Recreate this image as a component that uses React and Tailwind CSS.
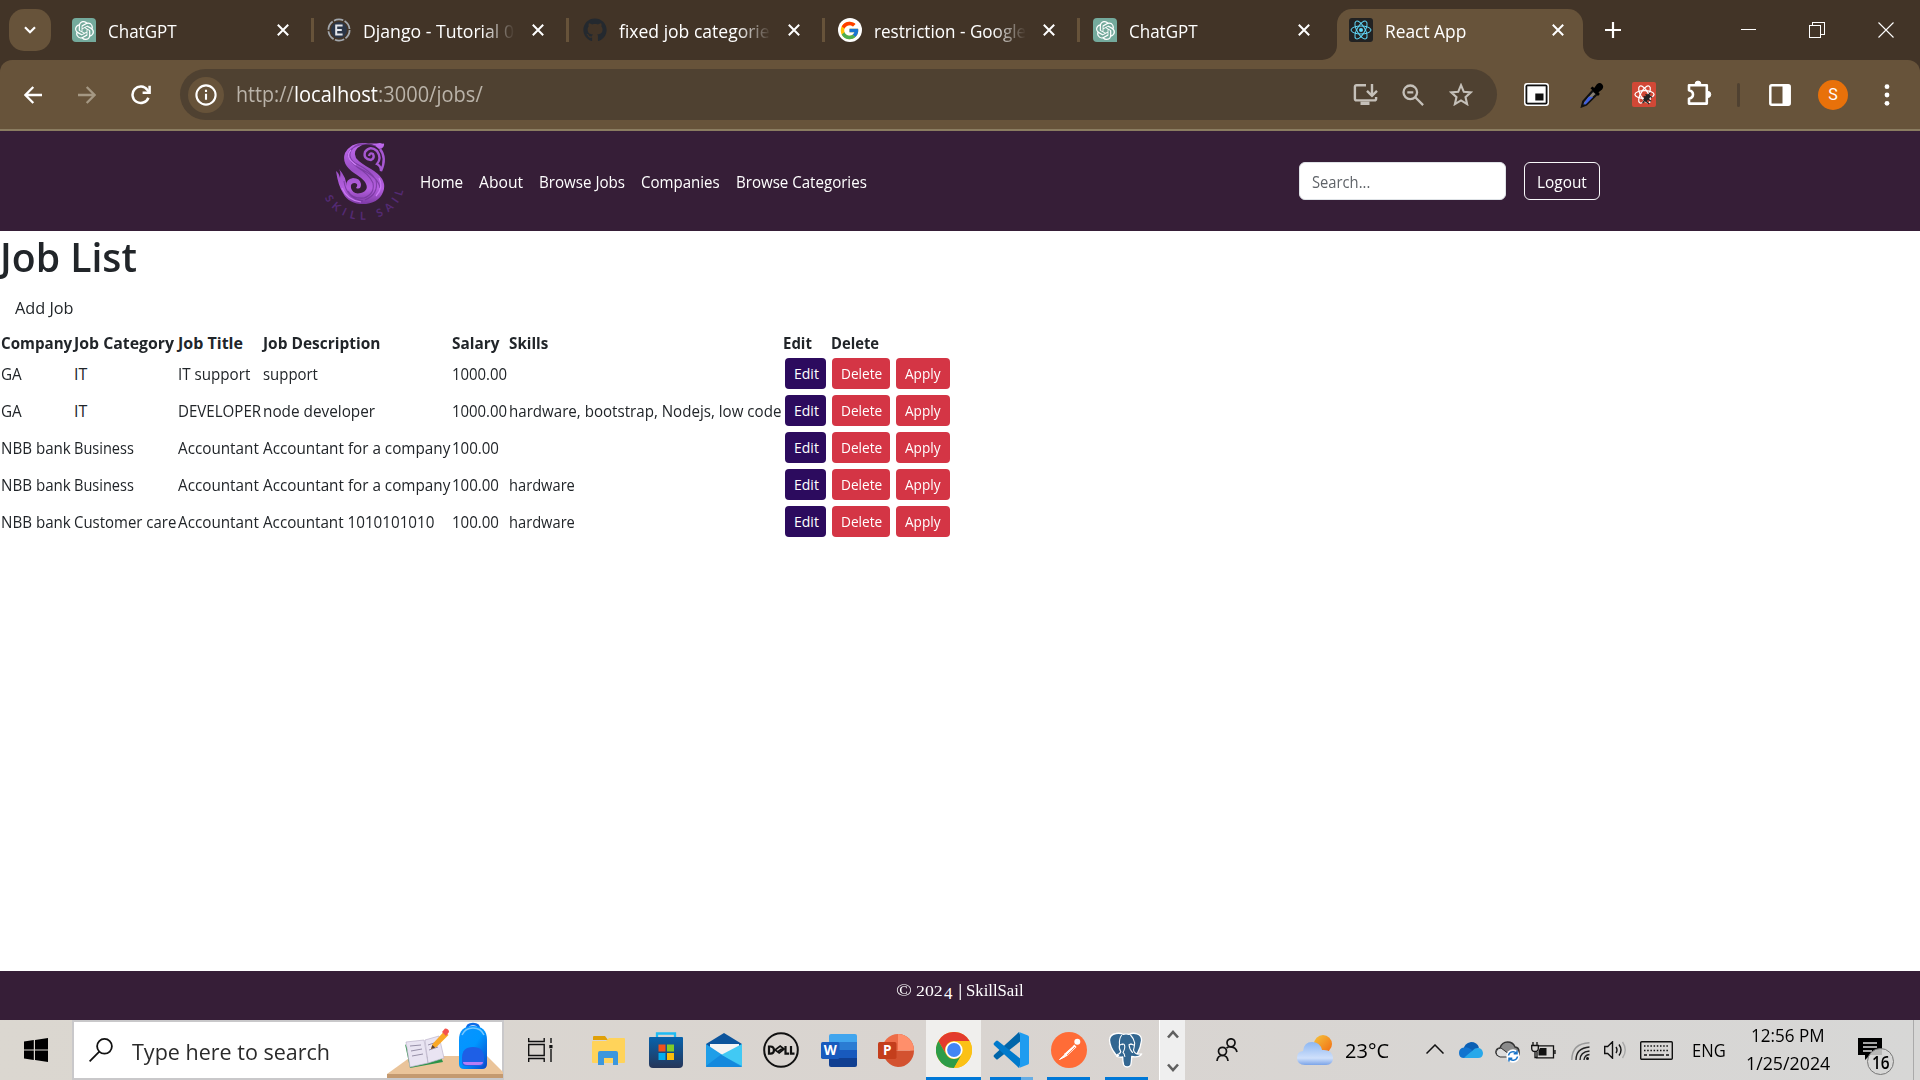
import React, { useLayoutEffect, useRef, useState } from "react";
import { SiOpenai } from "react-icons/si";
import { FaGithub } from "react-icons/fa";
import { FcGoogle } from "react-icons/fc";

/* Text run stretched to the width of its box. */
function Fit({ className = "", children }) {
  const box = useRef(null);
  const run = useRef(null);
  const [k, setK] = useState(1);
  useLayoutEffect(() => {
    setK(box.current.clientWidth / run.current.offsetWidth);
  }, []);
  return (
    <span ref={box} className={"block shrink-0 whitespace-nowrap " + className}>
      <span ref={run} className="inline-block origin-left" style={{ transform: `scaleX(${k})` }}>
        {children}
      </span>
    </span>
  );
}

const ReactAtom = ({ className, stroke, fill }) => (
  <svg viewBox="0 0 24 24" className={className} fill="none" stroke={stroke} strokeWidth="1">
    <ellipse cx="12" cy="12" rx="10" ry="4" />
    <ellipse cx="12" cy="12" rx="10" ry="4" transform="rotate(60 12 12)" />
    <ellipse cx="12" cy="12" rx="10" ry="4" transform="rotate(120 12 12)" />
    <circle cx="12" cy="12" r="2" fill={fill} stroke="none" />
  </svg>
);

const GptIcon = () => (
  <div className="flex size-6 shrink-0 items-center justify-center rounded-[4px] rounded-br-none bg-[#74aa9c]">
    <SiOpenai className="size-[19px] text-white" />
  </div>
);

const DjangoIcon = () => (
  <svg viewBox="0 0 24 24" className="size-6 shrink-0">
    <circle cx="12" cy="12" r="10.6" fill="none" stroke="#a3a8ae" strokeWidth="1.8" strokeDasharray="9.6 1.5" />
    <circle cx="12" cy="12" r="8" fill="#2b3648" />
    <path d="M15.6 7.4H9.2v9.2h6.4M9.2 12h5.6" fill="none" stroke="#e3e5ea" strokeWidth="2" />
  </svg>
);

const GoogleIcon = () => (
  <div className="flex size-6 shrink-0 items-center justify-center rounded-full bg-white">
    <FcGoogle className="size-[21px]" />
  </div>
);

const Cross = ({ className = "" }) => (
  <svg viewBox="0 0 12 12" className={"size-3 shrink-0 " + className} stroke="#fff" strokeWidth="2" fill="none">
    <path d="M.8.8l10.4 10.4M11.2.8L.8 11.2" />
  </svg>
);

const fade = "[mask-image:linear-gradient(to_right,#000_78%,transparent_100%)]";
const tabs = [
  { icon: <GptIcon />, title: "ChatGPT", w: "w-[69px]" },
  { icon: <DjangoIcon />, title: "Django - Tutorial 0", w: "w-[151px]", mask: fade },
  { icon: <FaGithub className="size-6 shrink-0 text-[#24292f]" />, title: "fixed job categorie", w: "w-[151px]", mask: fade },
  { icon: <GoogleIcon />, title: "restriction - Google", w: "w-[152px]", mask: fade },
  { icon: <GptIcon />, title: "ChatGPT", w: "w-[69px]", last: true },
];

function TabStrip() {
  return (
    <div className="flex h-[60px] bg-[#423427] text-[18px] leading-6 text-white">
      <div className="ml-[9px] mt-[9px] flex size-[42px] items-center justify-center rounded-[15px] bg-[#67533a]">
        <svg viewBox="0 0 12 8" className="h-2 w-3" fill="none" stroke="#fff" strokeWidth="2.2"><path d="M1 1.2l5 5 5-5" /></svg>
      </div>
      <div className="ml-[8px] flex">
        {tabs.map((t, i) => (
          <div key={i} className="flex h-[60px] w-[255.3px] items-center pl-[13px]">
            {t.icon}
            <div className={"ml-[12px] w-[152px] overflow-hidden pt-[2px] " + (t.mask || "")}>
              <Fit className={t.w}>{t.title}</Fit>
            </div>
            <Cross className="ml-[17px]" />
            {!t.last && <div className="ml-[22px] h-6 w-[3px] shrink-0 bg-[#67533a]" />}
          </div>
        ))}
      </div>
      <svg viewBox="0 0 15 15" className="-ml-[13.5px] mt-[45px] size-[15px]" fill="#67533a"><path d="M15 0v15H0A15 15 0 0015 0z" /></svg>
      <div className="mt-[9px] flex h-[51px] w-[246px] items-center rounded-t-[15px] bg-[#67533a] pb-[9px] pl-[12px]">
        <div className="flex size-6 items-center justify-center rounded-[3px] bg-[#222]">
          <ReactAtom className="size-6" stroke="#61dafb" fill="#61dafb" />
        </div>
        <div className="ml-[12px] w-[167px] pt-[2px]"><Fit className="w-[81px]">React App</Fit></div>
        <Cross />
      </div>
      <svg viewBox="0 0 15 15" className="mt-[45px] size-[15px]" fill="#67533a"><path d="M0 0v15h15A15 15 0 010 0z" /></svg>
      <svg viewBox="0 0 16 16" className="ml-[7px] mt-[22px] size-4" stroke="#fff" strokeWidth="2.2"><path d="M8 0v16M0 8h16" /></svg>
      <div className="ml-[120px] mt-[29px] h-px w-[15px] bg-white" />
      <svg viewBox="0 0 16 16" className="ml-[53px] mt-[22px] size-4" fill="none" stroke="#fff" shapeRendering="crispEdges">
        <path d="M.5 3.500h11v12H.5zM3.500 3.500v-3h12v12h-4" />
      </svg>
      <svg viewBox="0 0 16 16" className="ml-[53px] mt-[22px] size-4" stroke="#fff" strokeWidth="1.1"><path d="M.5.5l15 15M15.500.5l-15 15" /></svg>
    </div>
  );
}

function Toolbar() {
  return (
    <div className="bg-[#423427]">
      <div className="flex h-[71px] items-center rounded-t-[12px] border-b-2 border-[#8a7c60] bg-[#67533a]">
        <svg viewBox="0 0 18 18" className="ml-[24px] size-[18px]" fill="none" stroke="#fff" strokeWidth="2.3"><path d="M18 9H2M9.3 1L1.4 9l7.900 8" /></svg>
        <svg viewBox="0 0 18 18" className="ml-[36px] size-[18px]" fill="none" stroke="#a59883" strokeWidth="2.3"><path d="M0 9h16M8.700 1l7.900 8-7.900 8" /></svg>
        <svg viewBox="0 0 20 20" className="ml-[35px] size-5" fill="none" stroke="#fff" strokeWidth="2.5"><path d="M17.400 12.700A8.200 8.200 0 1116.400 5l2 2.400" /><path d="M18.600.8v7H11.600" /></svg>
        <div className="ml-[29px] flex h-[51px] w-[1317px] items-center rounded-full bg-[#4f4131]">
          <div className="ml-[8px] flex size-9 items-center justify-center rounded-full bg-[#67533a]">
            <svg viewBox="0 0 22 22" className="size-[22px]" fill="none" stroke="#fff" strokeWidth="2.1"><circle cx="11" cy="11" r="9.6" /><path d="M11 9.700v6M11 5.800v2.200" /></svg>
          </div>
          <div className="-mt-px ml-[12px] flex w-[1117px] text-[21px] leading-7 text-[#bab3a9]">
            <Fit className="w-[58px]">http://</Fit>
            <Fit className="w-[84px] text-white">localhost</Fit>
            <Fit className="w-[105px]">:3000/jobs/</Fit>
          </div>
          <svg viewBox="0 0 25 23" className="h-[23px] w-[25px]" fill="none" stroke="#c5c0b9" strokeWidth="2.4">
            <path d="M13 2.200H3.500q-1.600 0-1.600 1.600v12q0 1.600 1.600 1.600h18q1.600 0 1.600-1.600V14M19 1v11M14 7.800l5 5 5-5" /><path d="M7.500 18.500h9V22h-9z" fill="#c5c0b9" stroke="none" />
          </svg>
          <svg viewBox="0 0 22 22" className="ml-[24px] size-[22px]" fill="none" stroke="#c5c0b9" strokeWidth="2.3"><circle cx="8.3" cy="8.3" r="6.8" /><path d="M13.300 13.300l7.800 7.800M5.300 8.300h6" /></svg>
          <svg viewBox="0 0 24 23" className="ml-[25px] h-[23px] w-6" fill="none" stroke="#c5c0b9" strokeWidth="2.1"><path d="M12 2.200l2.800 6.600 7 .6-5.300 4.700 1.600 7-6.100-3.700-6.100 3.700 1.600-7L2.200 9.400l7-.6z" /></svg>
        </div>
        <svg viewBox="0 0 25 23" className="ml-[27px] h-[23px] w-[25px]"><rect width="25" height="23" rx="3" fill="#fff" /><rect x="1.5" y="1.5" width="22" height="20" rx="2" fill="#111" /><rect x="3.3" y="3.3" width="18.4" height="16.4" fill="#fff" /><rect x="11.3" y="10.5" width="8.2" height="7" fill="#111" /></svg>
        <svg viewBox="0 0 24 26" className="ml-[31px] h-[26px] w-6">
          <path d="M13 8.500L3.200 19.500 2 24.300l4.300-1.800L17 12z" fill="#888075" stroke="#111" strokeWidth="2.2" /><path d="M8.500 14.800l4.600.3-7.500 7.400-2.200-.2z" fill="#3f5fe0" />
          <path d="M10.500 6.200l2-1.600 1.700 1.500 2.700-3.800q3-2.400 5.200 0t0 5.300l-3.600 2.700 1.300 1.800-1.800 1.800z" fill="#000" />
        </svg>
        <div className="ml-[28px] flex h-[25px] w-6 items-center justify-center rounded-[2px] bg-[#d14836]">
          <svg viewBox="0 0 24 24" className="size-[23px]" fill="none" stroke="#fff" strokeWidth="1.3">
            <ellipse cx="12" cy="12" rx="10" ry="4" /><ellipse cx="12" cy="12" rx="10" ry="4" transform="rotate(60 12 12)" /><ellipse cx="12" cy="12" rx="10" ry="4" transform="rotate(120 12 12)" />
            <path d="M10 21l8-11M11 14l8 5M13 12l7 3M11 17l6 5" stroke="#222" strokeWidth="1.4" /><ellipse cx="14.5" cy="15.5" rx="2.5" ry="4.2" transform="rotate(38 14.5 15.5)" fill="#222" stroke="none" />
          </svg>
        </div>
        <svg viewBox="0 0 25 26" className="-mt-[3px] ml-[31px] h-[26px] w-[25px]" fill="none" stroke="#fff" strokeWidth="2.6" strokeLinejoin="round">
          <path d="M2 5.300h17.800v18.300H2v-4.900q4-.9 4-4.200T2 10.300z" /><path d="M8 4.500a3 3.400 0 016 0zM20.500 11.300a3.200 3.100 0 010 6.300z" fill="#fff" strokeWidth="1" />
        </svg>
        <div className="ml-[25px] h-6 w-[3px] rounded bg-[#4f4131]" />
        <svg viewBox="0 0 22 22" className="ml-[29px] size-[22px]"><rect x="1.3" y="1.3" width="19.4" height="19.4" rx="1.5" fill="none" stroke="#fff" strokeWidth="2.5" /><path d="M13.500 1H21v20h-7.500z" fill="#fff" /></svg>
        <div className="ml-[27px] flex size-[30px] items-center justify-center rounded-full bg-[#e8710a] font-[Roboto] text-[16px] text-white">S</div>
        <svg viewBox="0 0 6 22" className="ml-[36px] h-[22px] w-[6px]" fill="#fff"><circle cx="3" cy="2.7" r="2.4" /><circle cx="3" cy="11" r="2.4" /><circle cx="3" cy="19.3" r="2.4" /></svg>
      </div>
    </div>
  );
}

function Logo() {
  return (
    <svg viewBox="0 0 86 84" className="-mt-[3px] h-[84px] w-[86px] shrink-0 overflow-visible">
      <defs>
        <linearGradient id="sg" x1="0" y1="0" x2="0" y2="1"><stop offset="0" stopColor="#c26bf0" /><stop offset=".45" stopColor="#9b4fc6" /><stop offset=".75" stopColor="#b55fe0" /><stop offset="1" stopColor="#7d3aa4" /></linearGradient>
        <path id="arc" d="M4 55A41 35 0 0 0 84 54" />
      </defs>
      <path d="M61 5Q66 7 65 4Q66 11 60 11Q52 3 43 7Q33 12 37 20Q41 25 52 31Q67 40 65 51Q62 64 47 66Q30 67 24 55Q19 47 17 33Q20 35 21 40Q22 34 20 31Q28 40 27 48Q27 41 34 40Q41 40 42 46Q42 52 37 50Q40 46 36 45Q31 45 32 50Q34 57 42 55Q51 52 46 44Q43 40 35 35Q22 26 26 15Q32 4 46 5Q54 6 61 5Z" fill="url(#sg)" />
      <path d="M61 11Q68 20 62 33Q62 28 58 26Q63 20 58 13Q51 7 46 14Q44 21 52 22Q56 20 54 16Q51 14 50 18" fill="none" stroke="#a657d2" strokeWidth="2.4" />
      <path d="M57 8Q40 3 34 10Q27 18 36 25Q52 33 57 42Q60 56 46 62M49 6Q31 7 29 17Q31 26 42 31Q60 40 61 50M25 43Q27 60 44 63M29 53Q33 61 45 60Q56 56 54 45Q50 36 38 29" fill="none" stroke="#713597" strokeWidth="1.1" opacity=".75" />
      <path d="M60 40Q65 49 57 58M32 12Q25 19 37 27M23 50Q28 62 42 64" fill="none" stroke="#ca7af4" strokeWidth="1.2" />
      <text fill="#542a74" fontFamily="Lato, sans-serif" fontSize="11" fontWeight="700"><textPath href="#arc" startOffset="5" textLength="100">SKILL SAIL</textPath></text>
    </svg>
  );
}

function Nav() {
  return (
    <nav className="flex h-[100px] items-center bg-[#361e37] text-[16px] leading-6 text-white">
      <div className="ml-[319px] w-[101px]"><Logo /></div>
      <div className="flex w-[879px] gap-[16px] pt-px">
        <Fit className="w-[43px]">Home</Fit>
        <Fit className="w-[43.500px]">About</Fit>
        <Fit className="w-[86px]">Browse Jobs</Fit>
        <Fit className="w-[79px]">Companies</Fit>
        <Fit className="w-[130.500px]">Browse Categories</Fit>
      </div>
      <div className="flex h-[38px] w-[207px] items-center rounded-[6px] border border-[#dee2e6] bg-white pl-3 pt-px text-[#5f6368]"><Fit className="w-[58px]">Search...</Fit></div>
      <div className="ml-[18px] flex h-[38px] w-[76px] items-center rounded-[6px] border border-[#f8f9fa] pl-3 pt-px"><Fit className="w-[50px]">Logout</Fit></div>
    </nav>
  );
}

const heads = [["Company", "w-[71px]"], ["Job Category", "w-[100px]"], ["Job Title", "w-[65px]"], ["Job Description", "w-[117px]"], ["Salary", "w-[47px]"], ["Skills", "w-[39px]"], ["Edit", "w-[29px]"], ["Delete", "w-[48px]"], ["", "w-0"]];
const c = {
  ga: ["GA", "w-[21px]"], nbb: ["NBB bank", "w-[70px]"],
  it: ["IT", "w-[13px]"], bus: ["Business", "w-[60px]"], care: ["Customer care", "w-[102px]"],
  acc: ["Accountant", "w-[81px]"], k: ["1000.00", "w-[55px]"], h: ["100.00", "w-[47px]"],
  hw: ["hardware", "w-[66px]"], comp: ["Accountant for a company", "w-[187px]"], none: ["", "w-0"],
};
const rows = [
  [c.ga, c.it, ["IT support", "w-[72px]"], ["support", "w-[55px]"], c.k, c.none],
  [c.ga, c.it, ["DEVELOPER", "w-[83px]"], ["node developer", "w-[112px]"], c.k, ["hardware, bootstrap, Nodejs, low code", "w-[272px]"]],
  [c.nbb, c.bus, c.acc, c.comp, c.h, c.none],
  [c.nbb, c.bus, c.acc, c.comp, c.h, c.hw],
  [c.nbb, c.care, c.acc, ["Accountant 1010101010", "w-[171px]"], c.h, c.hw],
];

function Btn({ box, w, children }) {
  return (
    <button className={"flex h-[31px] items-center rounded-[4px] pl-[9px] text-[14px] leading-[21px] text-white " + box}>
      <Fit className={w}>{children}</Fit>
    </button>
  );
}

function Jobs() {
  return (
    <main className="h-[740px] bg-white text-[16px] leading-6 text-[#212529]">
      <h1 className="h-[56px] pt-px text-[40px] font-semibold leading-[50px]"><Fit className="w-[137px]">Job List</Fit></h1>
      <div className="h-[42px] pl-[15px] pt-[9px]"><Fit className="w-[58.500px]">Add Job</Fit></div>
      <table className="w-[950px] table-fixed border-collapse text-left">
        <colgroup>
          <col className="w-[73px]" /><col className="w-[104px]" /><col className="w-[85px]" /><col className="w-[189px]" /><col className="w-[57px]" /><col className="w-[274px]" /><col className="w-[48px]" /><col className="w-[65px]" /><col className="w-[55px]" />
        </colgroup>
        <thead>
          <tr>{heads.map(([t, w], i) => <th key={i} className="h-[26px] px-px pb-0 pt-[2px] font-bold"><Fit className={w}>{t}</Fit></th>)}</tr>
        </thead>
        <tbody>
          {rows.map((r, i) => (
            <tr key={i} className="h-[37px]">
              {r.map(([t, w], j) => <td key={j} className="px-px pt-px align-middle">{t && <Fit className={w}>{t}</Fit>}</td>)}
              <td className="pl-[3px]"><Btn box="w-[41px] bg-[#2c0b5e]" w="w-[24.500px]">Edit</Btn></td>
              <td className="pl-[2px]"><Btn box="w-[58px] bg-[#d43545]" w="w-[41px]">Delete</Btn></td>
              <td className="pl-px"><Btn box="w-[54px] bg-[#d43545]" w="w-[36px]">Apply</Btn></td>
            </tr>
          ))}
        </tbody>
      </table>
    </main>
  );
}

function SearchArt() {
  return (
    <svg viewBox="386 1022 116 58" className="absolute -right-px bottom-0 h-[58px] w-[116px] overflow-visible" preserveAspectRatio="none">
      <defs><linearGradient id="bp" x1="0" y1="0" x2="1" y2="1"><stop offset="0" stopColor="#0a93ff" /><stop offset=".5" stopColor="#0096ff" /><stop offset="1" stopColor="#0a46c8" /></linearGradient></defs>
      <path d="M411 1058h75l16 16v2H386z" fill="#eac49a" /><path d="M386 1076h116v4H386z" fill="#c49a70" />
      <path d="M404 1046l5 24 33-6-3-7-24 4z" fill="#2b9348" /><path d="M405 1044l18-2 4 23-18 4zM424 1042l14-4 5 22-16 5z" fill="#e9e4f2" stroke="#bdb5cc" strokeWidth=".7" />
      <path d="M409 1048l11-1M410 1053l11-2M411 1058l11-2M427 1047l9-3M428 1052l9-3" stroke="#9790a8" strokeWidth="1" />
      <path d="M430 1051l1.500-5 12-13 4 4-12 12z" fill="#f9a825" /><path d="M441 1034l3-3.500q4 0 4 3.500l-3 4z" fill="#f4524d" /><path d="M430 1051l1.300-4 3 2.500z" fill="#5b4030" />
      <path d="M466 1031q0-5 6-5t6 5" fill="none" stroke="#0d6be8" strokeWidth="2.500" />
      <path d="M458 1042q0-14 14-14t14 14v24q0 5-5 5h-18q-5 0-5-5z" fill="url(#bp)" />
      <path d="M461 1060q0-11 11-11t11 11v4q0 4-4 4h-14q-4 0-4-4z" fill="#1e5fe6" /><path d="M462 1064q0 3 4 3h12q4 0 4-3z" fill="#b77df5" /><path d="M461 1037q3-7 11-7t11 7" fill="none" stroke="#77c7ff" strokeWidth="1.500" />
    </svg>
  );
}

function Explorer() {
  return <svg viewBox="0 0 33 31" className="h-[31px] w-[33px]"><path d="M1 2q0-1 1-1h11l3 4H1z" fill="#e0a008" /><path d="M1 6h13l3-3h15q1 0 1 1v23q0 1-1 1H1q-1 0-1-1V7q0-1 1-1z" fill="#ffd35a" /><path d="M6 30V18q0-2 2-2h16q2 0 2 2v12h-5v-7h-9v7z" fill="#3c97dd" /></svg>;
}
function Store() {
  return <svg viewBox="0 0 36 36" className="size-9"><defs><linearGradient id="st" x1="0" y1="0" x2="0" y2="1"><stop stopColor="#0763ad" /><stop offset="1" stopColor="#263558" /></linearGradient></defs><path d="M9 7V1.500h18V7" fill="none" stroke="#1ebcf4" strokeWidth="2.300" /><path d="M1 6q0-1 1-1h32q1 0 1 1v26q0 4-4 4H5q-4 0-4-4z" fill="url(#st)" /><path d="M10.500 12.500h7v7h-7z" fill="#f1511b" /><path d="M19 12.500h7v7h-7z" fill="#80cc28" /><path d="M10.500 21h7v7h-7z" fill="#00adef" /><path d="M19 21h7v7h-7z" fill="#fbbc09" /></svg>;
}
function Mail() {
  return <svg viewBox="0 0 36 34" className="h-[34px] w-9"><path d="M0 11L18 0l18 11v9H0z" fill="#0c549c" /><path d="M4 11h29v12H4z" fill="#f4f4f4" /><path d="M0 11l18 12L36 11v22q0 1-1 1H1q-1 0-1-1z" fill="#1f9ee8" /><path d="M36 11v22L15 22z" fill="#41c9f4" /><path d="M15 21.500L36 34H1q-1 0-1-1z" fill="#1489dd" /></svg>;
}
function Dell() {
  return <svg viewBox="0 0 36 36" className="size-9"><circle cx="18" cy="18" r="16.800" fill="none" stroke="#111" strokeWidth="2" /><g fill="none" stroke="#111" strokeWidth="2.200"><path d="M6 14.500v7.200h1.500q3.500 0 3.500-3.600t-3.500-3.600zM22.500 14v7.700h3.600M28 14v7.700h3.500" /><path d="M12 18l5.200-4 4 3-5 4zM14.500 20l5.500-4" strokeWidth="1.600" /></g></svg>;
}
function Office({ letter, kind }) {
  const word = kind === "word";
  return (
    <svg viewBox="0 0 36 33" className="h-[33px] w-9">
      {word ? (
        <><path d="M8 2q0-2 2-2h24q2 0 2 2v6.500H8z" fill="#41a5ee" /><path d="M8 8h28v8.500H8z" fill="#2b7cd3" /><path d="M8 16h28v8.500H8z" fill="#185abd" /><path d="M8 24h28v7q0 2-2 2H10q-2 0-2-2z" fill="#103f91" /></>
      ) : (
        <><path d="M20 0a16 16.500 0 010 33 16 16.500 0 01-15-16.500H36A16 16.500 0 0120 0z" fill="#d35230" /><path d="M20 0A16 16.500 0 004 16.500h16z" fill="#ed6c47" /><path d="M20 0a16 16.500 0 0116 16.500H20z" fill="#ff8f6b" /></>
      )}
      <rect x="0" y="8" width="18.500" height="17" rx="1.700" fill={word ? "#185abd" : "#c43e1c"} />
      <text x="9.200" y="21.300" textAnchor="middle" fill="#fff" fontFamily="Open Sans, sans-serif" fontWeight="700" fontSize="13.500">{letter}</text>
    </svg>
  );
}
function Chrome() {
  return <svg viewBox="0 0 48 48" className="size-9"><circle cx="24" cy="24" r="24" fill="#fbc116" /><path d="M3.200 12A24 24 0 0144.800 12H24a12 12 0 00-10.400 18z" fill="#e33b2e" /><path d="M3.200 12L13.600 30A12 12 0 0024 36a12 12 0 0010.400-6L24 48A24 24 0 013.200 12z" fill="#2d9c48" /><path d="M44.800 12H24l10.400 18L24 48A24 24 0 0044.800 12z" fill="#fbc116" /><circle cx="24" cy="24" r="11.500" fill="#fff" /><circle cx="24" cy="24" r="9.200" fill="#4285f4" /></svg>;
}
function Code() {
  return <svg viewBox="0 0 36 36" className="size-9"><path d="M1.500 22.500L26 0l3 8L5 27q-1 1-2 0l-2-2q-1-1 .5-2.500z" fill="#0065a9" /><path d="M1.500 13.500L26 36l3-8L5 9Q4 8 3 9l-2 2q-1 1 .5 2.500z" fill="#007acc" /><path d="M26 0l9 3.500q1 .5 1 1.500v26q0 1-1 1.500L26 36q1-.5 1-2V2q0-1.500-1-2z" fill="#1f9cf0" /></svg>;
}
function Postman() {
  return <svg viewBox="0 0 36 36" className="size-9"><circle cx="18" cy="18" r="18" fill="#ff6c37" /><path d="M23.500 12.500L13 22l2.500 2.500L25.500 15z" fill="#fff" /><path d="M14 22.500l-5.500 5 6-3z" fill="#fff" stroke="#fff" /><circle cx="26.300" cy="9.700" r="3" fill="#fff" /><path d="M14 20.500l8-7M16 23l8-8" stroke="#ff6c37" strokeWidth=".8" /></svg>;
}
function Pg() {
  return (
    <svg viewBox="0 0 36 36" className="size-9" strokeLinejoin="round" strokeLinecap="round">
      <path d="M8 1.500q4-.8 7 .8 3-1 6 0 4-1.800 8-.5 5 1.700 4.500 7-.8 7-4.300 13 3 .6 4.500 0-2 3.200-7 3l-3-.3q-.2 6-1 8.500-1 2-3.500 2t-3.500-2q-1-3-1-8-2.500.7-6-.5l2-1q-1.500.5-3-1Q1.800 15 1.500 8q.3-5.500 6.500-6.500z" fill="#336791" stroke="#fff" strokeWidth="1.300" />
      <path d="M13.500 3.500q-2.500 3-2 9-.8 4.500 1.300 7-1 2.800-3.800 3M22.500 3q3.500 3.500 4.200 8-.4 5-1.200 7 .5 3 3.500 4M12 13q3.500-2 4.500 0 1 3-1.500 7.500 1.500 1 1.800 4M25.500 13q-2.500-1.500-4.500-.3.500 5 3.500 7.800" fill="none" stroke="#fff" strokeWidth="1.100" />
      <circle cx="14.300" cy="12.500" r=".7" fill="#fff" /><circle cx="23" cy="12.200" r=".7" fill="#fff" />
    </svg>
  );
}

const apps = [
  { el: <Explorer /> }, { el: <Store /> }, { el: <Mail /> }, { el: <Dell /> },
  { el: <Office letter="W" kind="word" /> }, { el: <Office letter="P" /> },
  { el: <Chrome />, bar: "w-[55px] bg-[#0078d7]", bg: "bg-[#f0efed]" },
  { el: <Code />, bar: "w-[43px] border-r-[12px] border-[#66ade4] bg-[#0078d7]" },
  { el: <Postman />, bar: "w-[43px] bg-[#0078d7]" },
  { el: <Pg />, bar: "w-[43px] bg-[#0078d7]" },
];

function Taskbar() {
  return (
    <div className="flex h-[60px] items-center bg-linear-to-r from-[#dbd7d0] via-[#d9d4d0] to-[#d7d7d6] text-black">
      <svg viewBox="0 0 24 24" className="ml-6 size-6"><path d="M0 3.400l9.800-1.400v9.400H0zM11 1.900L24 0v11.400H11zM0 12.600h9.800V22L0 20.600zM11 12.600h13V24l-13-1.900z" /></svg>
      <div className="relative ml-[24px] flex h-[60px] w-[432px] items-center border-2 border-[#c9c8ca] bg-white">
        <svg viewBox="0 0 24 24" className="ml-[15px] size-6" fill="none" stroke="#111" strokeWidth="1.800"><circle cx="15.500" cy="8.300" r="7.400" /><path d="M10.300 13.600L.6 23.400" /></svg>
        <div className="ml-[19px] pt-[3px] text-[22.500px] leading-7 text-[#2b2b2b]"><Fit className="w-[198px]">Type here to search</Fit></div>
        <SearchArt />
      </div>
      <svg viewBox="0 0 25 24" className="ml-[24px] h-6 w-[25px]" fill="none" stroke="#111" strokeWidth="1.400"><path d="M.7 0v3.500h15.500V0M.7 24v-3.500h15.500V24M.7 6.500h15.500v11H.7zM23 0v5M23 11v13" /><path d="M21.300 7h3.200v3.200h-3.200z" fill="#111" stroke="none" /></svg>
      <div className="ml-[27px] flex">
        {apps.map((a, i) => (
          <div key={i} className="flex h-[60px] w-[57.500px] justify-center">
            <div className={"flex w-[55px] flex-col items-center " + (a.bg || "")}>
              <div className="flex h-[57px] items-center pt-[3px]">{a.el}</div>
              {a.bar && <div className={"h-[3px] " + a.bar} />}
            </div>
          </div>
        ))}
      </div>
      <div className="ml-[4px] flex h-[60px] w-[26px] flex-col items-center justify-between border-l border-white bg-[#efefef] pb-[8px] pt-[10px]">
        <svg viewBox="0 0 12 9" className="h-[9px] w-3" fill="none" stroke="#606060" strokeWidth="2.600"><path d="M1 7.500l5-5.500 5 5.500" /></svg>
        <svg viewBox="0 0 12 9" className="h-[9px] w-3" fill="none" stroke="#606060" strokeWidth="2.600"><path d="M1 1.500L6 7l5-5.500" /></svg>
      </div>
      <svg viewBox="0 0 22 24" className="ml-[31px] h-6 w-[22px]" fill="none" stroke="#111" strokeWidth="1.700"><circle cx="15" cy="4.800" r="4" /><circle cx="6.500" cy="13.300" r="4" /><path d="M1 23q.5-5.500 5.500-5.500T12 23M10.500 10q2-1.500 4.500-1.200 5 .4 6 5.200" /></svg>
      <svg viewBox="0 0 36 30" className="ml-[59px] h-[30px] w-9"><defs><linearGradient id="cl" x1="0" y1="0" x2="0" y2="1"><stop stopColor="#8db7f2" /><stop offset=".7" stopColor="#cfe0fb" /><stop offset="1" stopColor="#7ba4e8" /></linearGradient><linearGradient id="sun" x1="0" y1="0" x2="1" y2="1"><stop stopColor="#f5c43c" /><stop offset="1" stopColor="#f26a12" /></linearGradient></defs><circle cx="26" cy="9" r="9" fill="url(#sun)" /><path d="M8 30q-8-.5-8-7t6-7Q7 7 15 7t10 8q10-1 11 8 0 6.500-7 7z" fill="url(#cl)" /></svg>
      <div className="ml-[12px] w-[81px] text-[20.500px] leading-7"><Fit className="w-[44px]">23°C</Fit></div>
      <svg viewBox="0 0 18 10" className="-mt-[2px] h-[10px] w-[18px]" fill="none" stroke="#111" strokeWidth="1.500"><path d="M.5 9.500L9 1l8.500 8.500" /></svg>
      <svg viewBox="0 0 24 16" className="ml-[15px] h-4 w-6"><path d="M4 9Q5 1 12 0q6 0 8 5.500L10 12z" fill="#0a5fb4" /><path d="M5 16Q0 16 0 11t5-5.500q4-1 8 2.500l-2 8z" fill="#1274cf" /><path d="M7 14l9-7.500q7-2 8 4.500 0 5-5 5H5z" fill="#28a8ea" /></svg>
      <svg viewBox="0 0 25 22" className="ml-[12px] mt-[3px] h-[22px] w-[25px]"><path d="M5 15q-4-.5-4-4t4-4Q7 1 12.500 1T20 6q4 .5 4 4.500V14L12 15z" fill="#8a8a8a" stroke="#333" strokeWidth="1.500" /><path d="M1 11Q2 7 6 7l8 6-2 3H5q-4-1-4-5z" fill="#ddd" stroke="#333" /><circle cx="18" cy="15" r="6.700" fill="#fff" /><path d="M13.500 14.500a4.500 4.500 0 018-2M22.500 15.500a4.500 4.500 0 01-8 2M22 9.500v3.300h-3.300M14 20.500v-3.300h3.300" fill="none" stroke="#1874c9" strokeWidth="1.500" /></svg>
      <svg viewBox="0 0 25 17" className="ml-[11px] h-[17px] w-[25px]" fill="none" stroke="#111" strokeWidth="1.300"><path d="M7 3.800h15.500v12H6V10M24 8v4" /><path d="M9 6h6.500v7.500h-8V9z" fill="#111" stroke="none" /><path d="M.7 3.500h6.600v3q0 3-3.300 3T.7 6.500zM2 0v3.500M6 0v3.500M4 9.500v6h2" /></svg>
      <svg viewBox="0 0 19 18" className="ml-[15px] mt-[2px] h-[18px] w-[19px]" fill="none" strokeWidth="1.400"><path d="M.8 18Q.8 1.500 18.500.8" stroke="#999" /><path d="M5 18Q5 6 18.500 5M9 18q0-8 9.500-9M13 18q.5-5 5.500-5.500" stroke="#222" /><circle cx="16.500" cy="16.500" r="1.500" fill="#111" /></svg>
      <svg viewBox="0 0 23 18" className="ml-[14px] h-[18px] w-[23px]" fill="none" stroke="#111" strokeWidth="1.400"><path d="M.7 5.500h3L8.500.8v16.400L3.700 12.500h-3zM12 6q2 3 0 6M15 3.500q4 5.500 0 11" /><path d="M18.500 1q5.500 8 0 16" stroke="#aaa" /></svg>
      <svg viewBox="0 0 33 19" className="ml-[13px] h-[19px] w-[33px]" fill="none" stroke="#111" strokeWidth="1.400"><rect x=".7" y=".7" width="31.600" height="17.600" rx="1" /><path d="M4 5h25M4 9.500h25" strokeDasharray="1.500 1.700" /><path d="M4 14h3M9 14h15M26 14h3" /></svg>
      <div className="ml-[19px] text-[18px] leading-6"><Fit className="w-[34px]">ENG</Fit></div>
      <div className="-mt-[2px] ml-[20px] flex w-[84px] flex-col items-center text-[18px] leading-[28px]"><Fit className="w-[74px]">12:56 PM</Fit><Fit className="w-[84px]">1/25/2024</Fit></div>
      <div className="relative ml-[28px] h-[60px] w-[38px]">
        <svg viewBox="0 0 24 22" className="mt-[18px] h-[22px] w-6"><path d="M0 0h24v17H12l-5 5v-5H0z" /><path d="M5 5h14M5 9h14M5 13h9" stroke="#ddd" strokeWidth="1.300" /></svg>
        <div className="absolute left-[9px] top-[28px] flex size-[27px] items-center justify-center rounded-full border border-[#777] bg-[#d7d7d6]/85 text-[18px] font-semibold leading-none">
          <Fit className="w-[18px]">16</Fit>
        </div>
      </div>
      <div className="ml-auto mr-[6px] h-[60px] w-px bg-[#aaa]" />
    </div>
  );
}

export default function App() {
  return (
    <div className="h-[1080px] w-[1920px] overflow-hidden font-['Open_Sans',sans-serif]">
      <TabStrip />
      <Toolbar />
      <Nav />
      <Jobs />
      <footer className="flex h-[49px] bg-[#361e37] pl-[896px] pt-[8px] font-['Liberation_Serif',serif] text-[17px] leading-6 text-white">
        <Fit className="w-[16px]">©</Fit>
        <Fit className="ml-[4px] w-[27px] text-[14.500px]">202</Fit>
        <Fit className="ml-px w-[9px] pt-[3px]">4</Fit>
        <Fit className="ml-[5px] w-[4px]">|</Fit>
        <Fit className="ml-[4px] w-[58px]">SkillSail</Fit>
      </footer>
      <Taskbar />
    </div>
  );
}
